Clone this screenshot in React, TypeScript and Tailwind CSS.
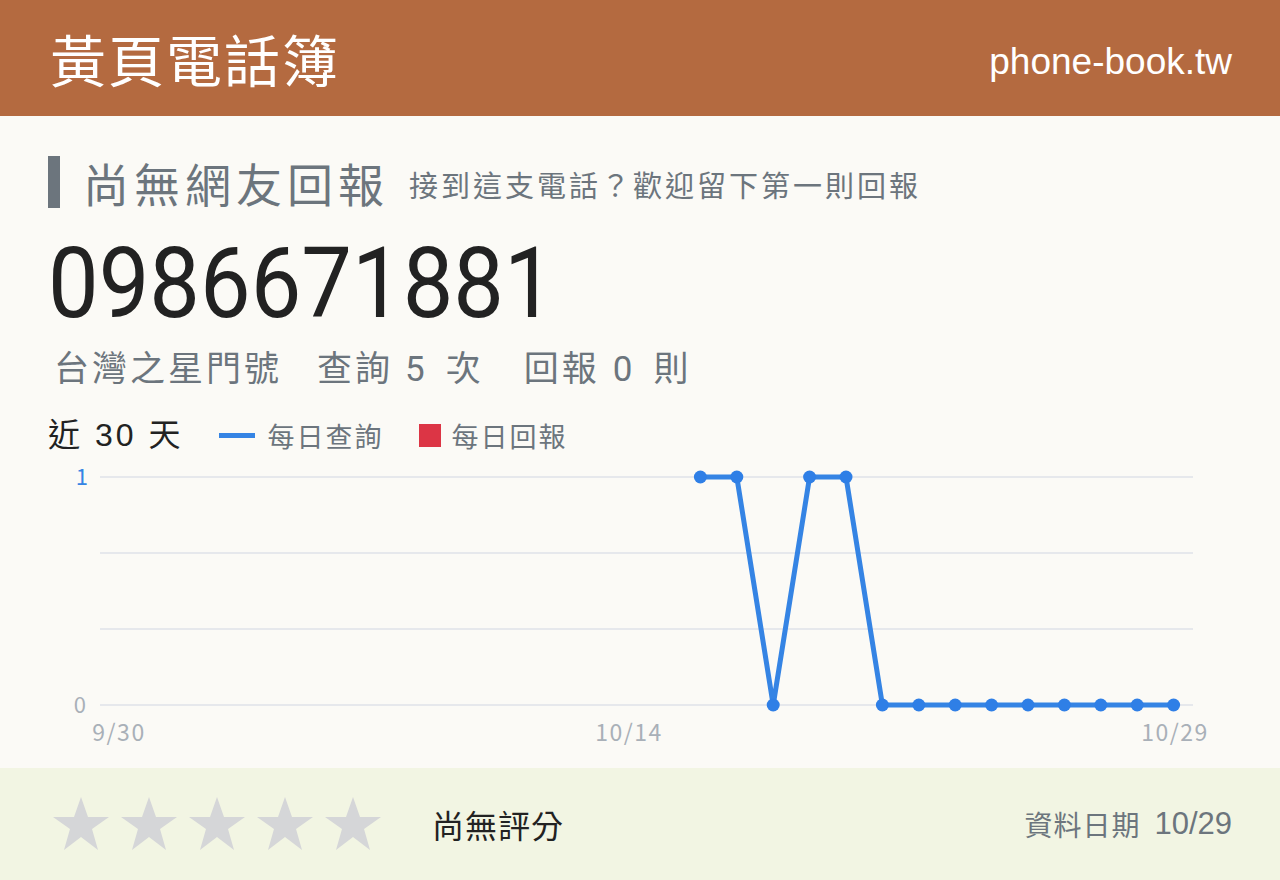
import React from "react";

const CJK = "'Noto Sans CJK TC', 'Noto Sans', sans-serif";
const LATIN_CJK = "'Liberation Sans', 'Noto Sans CJK TC', sans-serif";
const ROBOTO_CJK = "Roboto, 'Noto Sans CJK TC', sans-serif";

const values: (number | null)[] = [
  null, null, null, null, null, null, null, null, null, null,
  null, null, null, null, null, null, 1, 1, 0, 1,
  1, 0, 0, 0, 0, 0, 0, 0, 0, 0,
];

function Star() {
  return (
    <svg width="58" height="56" viewBox="0 0 58 56" className="block">
      <polygon
        points="29,1 36,21 57,21 40,33 46,54 29,41 12,54 18,33 1,21 22,21"
        fill="#d5d6d8"
      />
    </svg>
  );
}

function Chart() {
  const x0 = 70;
  const step = 36.4;
  const yTop = 18;
  const yBot = 246;
  const pts = values
    .map((v, i) => (v === null ? null : { x: x0 + step * i, y: v === 1 ? yTop : yBot }))
    .filter((p): p is { x: number; y: number } => p !== null);
  const path = pts.map((p, i) => `${i === 0 ? "M" : "L"}${p.x},${p.y}`).join(" ");
  return (
    <svg width="1184" height="294" viewBox="0 0 1184 294" className="block" style={{ fontFamily: CJK }}>
      {[18, 94, 170, 246].map((y) => (
        <line key={y} x1="52" x2="1145" y1={y} y2={y} stroke="#e6e8ec" strokeWidth="2" />
      ))}
      <text x="40" y="26" textAnchor="end" fontSize="22" fill="#3584e4">1</text>
      <text x="38" y="254" textAnchor="end" fontSize="22" fill="#a9b0b8">0</text>
      <g fontSize="23" fill="#a9b0b8" letterSpacing="1.5" textAnchor="middle">
        <text x="71" y="282">9/30</text>
        <text x="581" y="282">10/14</text>
        <text x="1127" y="282">10/29</text>
      </g>
      <path d={path} fill="none" stroke="#3584e4" strokeWidth="5" strokeLinejoin="round" />
      {pts.map((p, i) => (
        <circle key={i} cx={p.x} cy={p.y} r="6.5" fill="#2f7fe6" />
      ))}
    </svg>
  );
}

export default function App() {
  return (
    <div className="w-[1280px] h-[880px] flex flex-col bg-[#fbfaf6]" style={{ fontFamily: LATIN_CJK }}>
      <header className="h-[116px] shrink-0 bg-[#b46a40] flex items-center justify-between pl-[50px] pr-[48px]">
        <div className="text-white text-[56px] leading-none tracking-[2px]" style={{ fontFamily: CJK }}>
          黃頁電話簿
        </div>
        <div className="text-white text-[37px] leading-none pt-[6px]">phone-book.tw</div>
      </header>

      <main className="flex-1 flex flex-col pl-[48px] pr-[48px] pt-[34px]">
        <div className="flex items-center h-[64px]">
          <div className="w-[12px] h-[52px] bg-[#6c757d]" />
          <h1 className="ml-[23px] text-[46px] leading-none tracking-[5px] text-[#6c757d]" style={{ fontFamily: CJK }}>
            尚無網友回報
          </h1>
          <p className="ml-[20px] mt-[4px] text-[29px] leading-none tracking-[3px] text-[#6c757d]" style={{ fontFamily: CJK }}>
            接到這支電話？歡迎留下第一則回報
          </p>
        </div>

        <div
          className="mt-[21px] text-[98px] leading-none text-[#222222] origin-left scale-x-[0.92] whitespace-nowrap"
          style={{ fontFamily: "Roboto, sans-serif" }}
        >
          0986671881
        </div>

        <div
          className="mt-[19px] ml-[6px] flex items-center text-[35px] leading-none text-[#6c757d] tracking-[3px]"
          style={{ fontFamily: ROBOTO_CJK }}
        >
          <span>台灣之星門號</span>
          <span className="ml-[35px]">查詢</span>
          <span className="ml-[12px] mr-[21px] tracking-normal">5</span>
          <span>次</span>
          <span className="ml-[40px]">回報</span>
          <span className="ml-[13px] mr-[21px] tracking-normal">0</span>
          <span>則</span>
        </div>

        <div className="mt-[32px] flex items-center leading-none">
          <span className="text-[32px] text-[#222222] tracking-[3px]">近 30 天</span>
          <span className="ml-[36px] w-[36px] h-[5px] bg-[#3584e4]" />
          <span className="ml-[12px] text-[27px] text-[#6c757d] tracking-[2px]" style={{ fontFamily: CJK }}>每日查詢</span>
          <span className="ml-[36px] w-[22px] h-[23px] bg-[#dc3545]" />
          <span className="ml-[10px] text-[27px] text-[#6c757d] tracking-[2px]" style={{ fontFamily: CJK }}>每日回報</span>
        </div>

        <div className="mt-[8px]">
          <Chart />
        </div>
      </main>

      <footer className="h-[112px] shrink-0 bg-[#f2f5e3] flex items-center pl-[52px] pr-[48px]">
        <div className="flex items-center gap-[10px]">
          <Star />
          <Star />
          <Star />
          <Star />
          <Star />
        </div>
        <div className="ml-[50px] text-[32px] text-[#222222] tracking-[1px]" style={{ fontFamily: CJK }}>
          尚無評分
        </div>
        <div className="ml-auto text-[28px] text-[#6c757d] flex items-center">
          <span className="tracking-[1px]" style={{ fontFamily: CJK }}>資料日期</span>
          <span className="ml-[14px] text-[31px]">10/29</span>
        </div>
      </footer>
    </div>
  );
}
